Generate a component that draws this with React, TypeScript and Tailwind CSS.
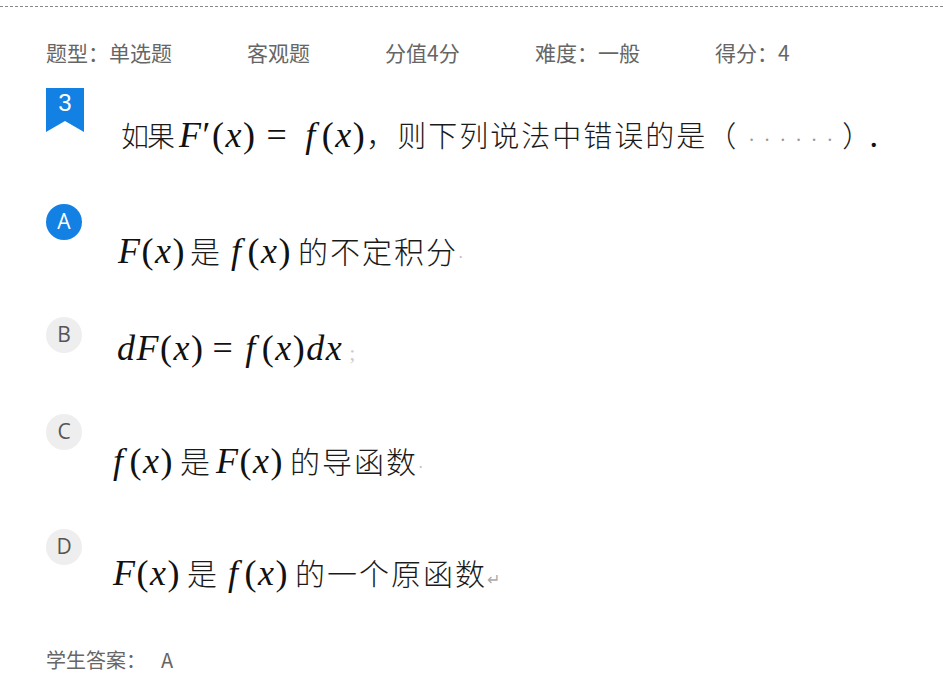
import React from 'react'

const serif = { fontFamily: '"Liberation Serif", "Noto Sans CJK SC", serif' }
const cjkFont = { fontFamily: '"Noto Sans CJK SC", sans-serif' }

const I = ({ children }: { children: React.ReactNode }) => (
  <span className="italic">{children}</span>
)

// the scanned formulas use a wide, swashy italic f
const F = ({ f }: { f: 'F' | 'f' }) =>
  f === 'f' ? <span className="italic pl-[7px] pr-[5px]">f</span> : <I>F</I>

const Fx = ({ f }: { f: 'F' | 'f' }) => (
  <span className="whitespace-nowrap">
    <F f={f} />(<I>x</I>)
  </span>
)

const Cjk = ({ children, className = '' }: { children: React.ReactNode; className?: string }) => (
  <span className={`font-light text-[#1a1a1a] ${className}`} style={cjkFont}>
    {children}
  </span>
)

interface OptionProps {
  letter: string
  selected?: boolean
  pt: string
  ml: string
  children: React.ReactNode
}

const Option = ({ letter, selected, pt, ml, children }: OptionProps) => (
  <div className="flex items-start">
    <div
      className={
        selected
          ? 'w-9 h-9 shrink-0 rounded-full bg-[#1380e4] text-white flex items-center justify-center text-[21px]'
          : 'w-9 h-9 shrink-0 rounded-full bg-[#eeeeee] text-[#555] flex items-center justify-center text-[21px]'
      }
      style={{ fontFamily: '"Open Sans", "Liberation Sans", sans-serif' }}
    >
      {letter}
    </div>
    <div className={pt}>
      <div
        className={`${ml} h-[40px] flex items-baseline whitespace-nowrap text-[36px] leading-[40px] tracking-[1.5px] text-[#111]`}
        style={serif}
      >
        {children}
      </div>
    </div>
  </div>
)

const OptCjk = ({ children, className = '' }: { children: React.ReactNode; className?: string }) => (
  <Cjk className={`text-[30px] tracking-[2px] ${className}`}>{children}</Cjk>
)

export default function App() {
  return (
    <div className="w-[943px] h-[687px] bg-white overflow-hidden pt-[6px]">
      <div className="border-t border-dashed border-[#888] px-[46px]">
        <div className="flex items-center h-[24px] mt-[34px] text-[21px] text-[#666]" style={cjkFont}>
          <span className="w-[201px]">题型：单选题</span>
          <span className="w-[138px]">客观题</span>
          <span className="w-[150px]">分值4分</span>
          <span className="w-[180px]">难度：一般</span>
          <span>得分：4</span>
        </div>

        <div className="flex items-start mt-[23px]">
          <div className="relative w-[38px] h-[44px] shrink-0">
            <svg width="38" height="44" viewBox="0 0 38 44" className="absolute inset-0">
              <polygon points="0,0 38,0 38,44 19,33 0,44" fill="#1380e4" />
            </svg>
            <span
              className="relative block text-center text-white text-[24px] leading-[30px]"
              style={{ fontFamily: '"Liberation Sans", sans-serif' }}
            >
              3
            </span>
          </div>
          <div className="mt-[26px]">
            <div
              className="ml-[37px] h-[40px] flex items-baseline whitespace-nowrap text-[36px] leading-[40px] tracking-[1.5px] text-[#111]"
              style={serif}
            >
              <Cjk className="text-[28px] tracking-[-2px]">如果</Cjk>
              <span className="ml-[6px]">
                <I>F</I>′(<I>x</I>)
              </span>
              <span className="mx-[10px]">=</span>
              <Fx f="f" />
              <Cjk className="text-[29px] tracking-[2px]">，则下列说法中错误的是（</Cjk>
              <span className="ml-[10px] text-[#999] text-[20px] tracking-[9px]">······</span>
              <Cjk className="text-[29px] tracking-[-6px]">）</Cjk>
              <span className="ml-[4px]">.</span>
            </div>
          </div>
        </div>

        <div className="mt-[50px] flex flex-col">
          <Option letter="A" selected pt="pt-[26px]" ml="ml-[36px]">
            <Fx f="F" />
            <OptCjk className="ml-[4px] mr-[2px]">是</OptCjk>
            <Fx f="f" />
            <OptCjk className="ml-[6px]">的不定积分</OptCjk>
            <span className="text-[#bbb] text-[16px]">·</span>
          </Option>
          <div className="h-[47px]" />
          <Option letter="B" pt="pt-[11px]" ml="ml-[35px]">
            <I>d</I>
            <I>F</I>(<I>x</I>)
            <span className="mx-[8px]">=</span>
            <span className="-ml-[4px]">
              <Fx f="f" />
            </span>
            <I>dx</I>
            <span className="text-[#ccc] text-[22px] ml-[6px]">;</span>
          </Option>
          <div className="h-[46px]" />
          <Option letter="C" pt="pt-[26px]" ml="ml-[30px]">
            <span className="-ml-[6px]">
              <Fx f="f" />
            </span>
            <OptCjk className="ml-[6px] mr-[4px]">是</OptCjk>
            <Fx f="F" />
            <OptCjk className="ml-[6px]">的导函数</OptCjk>
            <span className="text-[#bbb] text-[16px]">·</span>
          </Option>
          <div className="h-[49px]" />
          <Option letter="D" pt="pt-[23px]" ml="ml-[31px]">
            <Fx f="F" />
            <OptCjk className="ml-[6px] mr-[2px]">是</OptCjk>
            <Fx f="f" />
            <OptCjk className="ml-[6px]">的一个原函数</OptCjk>
            <span className="text-[#aaa] text-[16px]">↵</span>
          </Option>
        </div>

        <div className="mt-[56px] flex items-center text-[20px] leading-[24px] text-[#666]" style={cjkFont}>
          <span>学生答案：</span>
          <span className="ml-[15px]">A</span>
        </div>
      </div>
    </div>
  )
}
